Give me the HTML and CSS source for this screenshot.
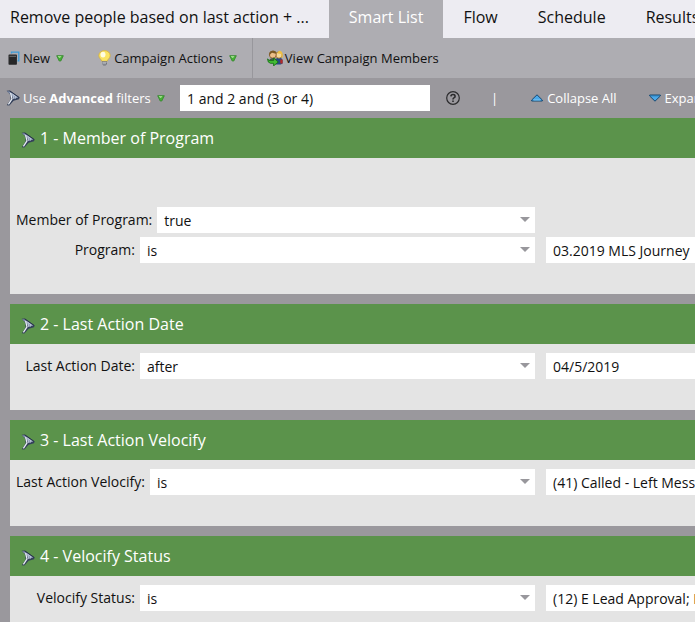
FILE: index.html
```html
<!DOCTYPE html>
<html lang="en">
<head>
    <meta charset="UTF-8">
    <meta name="viewport" content="width=device-width, initial-scale=1.0">
    <title>Smart List</title>
    <link rel="stylesheet" href="styles.css">
</head>
<body>
    <svg class="sprites" aria-hidden="true">
        <symbol id="funnel" viewBox="0 0 14 16">
            <path d="M.6 .8 3.800 .6 13.600 7.400 13 9.200 7.600 10.800 3.400 15.600 .8 15.200 4.600 9.600 4.300 4.800Z" fill="#34405a"/>
            <path d="M1 1.200 3.600 1.400 12.400 7.600 8 8.800 5.200 5Z" fill="#8d9bb4"/>
            <path d="M4.600 3.200 6 8.800 2.400 14.400" fill="none" stroke="#e8edf5" stroke-width="1.300"/>
            <path d="M5.500 3.400 10.500 7M7.200 5.200 7.600 9M9.400 6.400 9.200 8.800" fill="none" stroke="#cdd6e6" stroke-width=".7"/>
            <path d="M3.800 .9 13.300 7.500" fill="none" stroke="#222c45" stroke-width=".8"/>
        </symbol>
        <symbol id="down" viewBox="0 0 8 7">
            <path d="M.7 .7h6.600L4.800 6H3.200Z" fill="#45b035" stroke="#3c8a34" stroke-width=".9"/>
            <path d="M2 1.500h3.200M2.800 2.500h1.600" stroke="#a2e08f" stroke-width=".9"/>
        </symbol>
    </svg>

    <nav class="tabs">
        <h1 class="tabs-title">Remove people based on last action + ...</h1>
        <a class="tab active" href="#">Smart List</a>
        <a class="tab" href="#">Flow</a>
        <a class="tab" href="#">Schedule</a>
        <a class="tab" href="#">Results</a>
    </nav>

    <div class="toolbar">
        <div class="toolbar-group">
            <button class="tool">
                <svg class="icon-new" viewBox="0 0 12 14">
                    <path d="M3.500 2.500V1.200h7.300v8.600H9.500" fill="none" stroke="#3b9bd8" stroke-width="1.300"/>
                    <path d="M1.200 4.200h7v8.800h-7Z" fill="#262728" stroke="#262728" stroke-width="1.400" stroke-linejoin="round"/>
                    <path d="M1.500 5.300h6.500" stroke="#77797b" stroke-width=".9"/>
                </svg>
                New
                <svg class="down"><use href="#down"/></svg>
            </button>
            <button class="tool">
                <svg class="icon-bulb" viewBox="0 0 13 16">
                    <path d="M6.500 .6C3.200 .6 .8 2.800 .8 5.600c0 2.800 2.600 3.600 3 5.700h5.400c.4-2.100 3-2.900 3-5.700C12.200 2.800 9.800 .6 6.500 .6Z" fill="#fbe462" stroke="#d6ae3c" stroke-width=".8"/>
                    <ellipse cx="5" cy="4.600" rx="2.500" ry="2.900" fill="#fffde0"/>
                    <path d="M4 11.200h5v2.800L7.600 15.500H5.400L4 14Z" fill="#6d7078"/>
                    <path d="M4.300 12.300h4.300M4.300 13.800h3.800" stroke="#dddfe4" stroke-width=".7"/>
                </svg>
                Campaign Actions
                <svg class="down"><use href="#down"/></svg>
            </button>
        </div>
        <button class="tool tool-members">
            <svg class="icon-members" viewBox="0 0 16 16">
                <path d="M8.500 14.500V10q.5-2.500 3.500-2.500t3.600 2.500v3.500l-2 1Z" fill="#264a83"/>
                <path d="M13.300 9.500h2.300v4h-2.300Z" fill="#b82926"/>
                <circle cx="12" cy="5" r="3.200" fill="#f6d79b" stroke="#9c6d22" stroke-width=".8"/>
                <path d="M10.400 3.400Q10.800 .6 13 .8t2.700 3.200v4l-1.200-1V4Z" fill="#f0c245"/>
                <circle cx="5.800" cy="4.800" r="3.400" fill="#edc08a" stroke="#875628" stroke-width=".8"/>
                <path d="M2.200 6.500V3Q3 .6 6 .5t3.700 2.500L8 3.500 5 2.800 3.500 4Z" fill="#7c5a26"/>
                <path d="M2.500 11V9.800q.5-1.800 3.500-1.800t3.500 1.800V12Z" fill="#455848"/>
                <path d="M.6 8.800Q1.500 10.600 3 10.600h3.600V8l4.600 4-4.600 3.900v-2.600H3.500Q.6 13 .6 8.800Z" fill="#43bd35" stroke="#186f18" stroke-width=".9"/>
            </svg>
            View Campaign Members
        </button>
    </div>

    <main class="smart-list">
        <div class="filter-bar">
            <button class="filter-mode">
                <svg class="funnel"><use href="#funnel"/></svg>
                <span>Use <b>Advanced</b> filters</span>
                <svg class="down"><use href="#down"/></svg>
            </button>
            <input class="logic" type="text" aria-label="Filter logic" value="1 and 2 and (3 or 4)">
            <button class="help" aria-label="Help">
                <svg viewBox="0 0 14 14">
                    <circle cx="7" cy="7" r="6.300" fill="none" stroke="#2b2b2d" stroke-width="1.200"/>
                    <path d="M4.900 5.400Q5 3.500 7 3.500t2.100 1.700Q9.100 6.300 7.900 6.900 7 7.400 7 8.500" fill="none" stroke="#2b2b2d" stroke-width="1.600"/>
                    <path d="M6.200 9.500h1.600v1.500H6.200Z" fill="#2b2b2d"/>
                </svg>
            </button>
            <span class="divider">|</span>
            <button class="toggle-all">
                <svg viewBox="0 0 12 8"><path d="M6 .8 11.300 6v1H.7V6Z" fill="#4ba8e8" stroke="#174871"/><path d="M2.500 6h7" stroke="#8bd0fa" stroke-width=".8"/></svg>
                Collapse All
            </button>
            <button class="toggle-all">
                <svg viewBox="0 0 12 8"><path d="M6 7.200 11.300 2V1H.7v1Z" fill="#4ba8e8" stroke="#174871"/><path d="M2 1.800h8" stroke="#2872aa"/></svg>
                Expand All
            </button>
        </div>

        <section class="filter">
            <h2 class="filter-title"><svg class="funnel"><use href="#funnel"/></svg>1 - Member of Program</h2>
            <div class="filter-body with-blank">
                <div class="row">
                    <div class="field">
                        <label for="member">Member of Program:</label>
                        <div class="select"><select id="member"><option>true</option><option>false</option></select></div>
                    </div>
                </div>
                <div class="row">
                    <div class="field">
                        <label for="program">Program:</label>
                        <div class="select"><select id="program"><option>is</option><option>is not</option></select></div>
                    </div>
                    <input class="value" type="text" aria-label="Program value" value="03.2019 MLS Journey">
                </div>
            </div>
        </section>

        <section class="filter">
            <h2 class="filter-title"><svg class="funnel"><use href="#funnel"/></svg>2 - Last Action Date</h2>
            <div class="filter-body">
                <div class="row">
                    <div class="field">
                        <label for="date">Last Action Date:</label>
                        <div class="select"><select id="date"><option>after</option><option>before</option></select></div>
                    </div>
                    <input class="value" type="text" aria-label="Last Action Date value" value="04/5/2019">
                </div>
            </div>
        </section>

        <section class="filter">
            <h2 class="filter-title"><svg class="funnel"><use href="#funnel"/></svg>3 - Last Action Velocify</h2>
            <div class="filter-body">
                <div class="row">
                    <div class="field">
                        <label for="velocify">Last Action Velocify:</label>
                        <div class="select"><select id="velocify"><option>is</option><option>is not</option></select></div>
                    </div>
                    <input class="value" type="text" aria-label="Last Action Velocify value" value="(41) Called - Left Message">
                </div>
            </div>
        </section>

        <section class="filter">
            <h2 class="filter-title"><svg class="funnel"><use href="#funnel"/></svg>4 - Velocify Status</h2>
            <div class="filter-body">
                <div class="row">
                    <div class="field">
                        <label for="status">Velocify Status:</label>
                        <div class="select"><select id="status"><option>is</option><option>is not</option></select></div>
                    </div>
                    <input class="value" type="text" aria-label="Velocify Status value" value="(12) E Lead Approval; Lead">
                </div>
            </div>
        </section>
    </main>
</body>
</html>
```
FILE: styles.css
```css
* {
    box-sizing: border-box;
}
body {
    margin: 0;
    overflow: hidden;
    background-color: #9a989d;
    font-family: "Open Sans", sans-serif;
    font-size: 14px;
    color: #111;
}
button, input, select {
    font: inherit;
    color: inherit;
    border: none;
    border-radius: 0;
    padding: 0;
    margin: 0;
}
button {
    background: none;
    white-space: nowrap;
    cursor: pointer;
}
svg {
    display: block;
    flex: none;
}
.sprites {
    position: absolute;
    width: 0;
    height: 0;
}
.funnel {
    width: 14px;
    height: 16px;
}
.down {
    width: 8px;
    height: 7px;
}

/* tabs */
.tabs {
    display: flex;
    height: 38px;
    background-color: #edecf2;
    font-size: 16px;
    line-height: 34px;
    white-space: nowrap;
}
.tabs-title {
    flex: none;
    margin: 0;
    padding: 0 20px 0 10px;
    font-size: 16px;
    font-weight: 400;
}
.tab {
    flex: none;
    padding: 0 20px;
    color: #111;
    text-decoration: none;
}
.tab.active {
    background-color: #aeadb2;
    color: #fff;
}

/* toolbar */
.toolbar {
    display: flex;
    height: 40px;
    background-color: #aeadb2;
    font-size: 13px;
}
.toolbar-group {
    display: flex;
    gap: 34px;
    padding: 0 15px 0 8px;
    border-right: 1px solid #98979c;
}
.tool {
    display: flex;
    align-items: center;
    gap: 3px;
}
.tool .down {
    margin-left: 3px;
}
.tool-members {
    gap: 2px;
    padding-left: 14px;
}
.icon-new {
    width: 12px;
    height: 14px;
}
.icon-bulb {
    width: 13px;
    height: 16px;
}
.icon-members {
    width: 16px;
    height: 16px;
}

/* filter bar */
.filter-bar {
    display: flex;
    align-items: center;
    height: 40px;
    padding-left: 6px;
    font-size: 13px;
    color: #fff;
}
.filter-mode {
    display: flex;
    align-items: center;
    gap: 3px;
    width: 174px;
    flex: none;
}
.filter-mode .down {
    margin-left: 3px;
}
.logic {
    flex: none;
    width: 250px;
    height: 26px;
    padding: 0 7px;
    background-color: #fff;
    color: #111;
    font-size: 14px;
}
.help {
    flex: none;
    margin: 0 31px 0 16px;
}
.help svg {
    width: 14px;
    height: 14px;
}
.divider {
    margin-right: 33px;
}
.toggle-all {
    display: flex;
    align-items: center;
    flex: none;
    gap: 4px;
    margin-right: 32px;
}
.toggle-all svg {
    width: 12px;
    height: 8px;
}

/* filters */
.filter {
    margin: 0 0 10px 10px;
}
.filter-title {
    display: flex;
    align-items: center;
    gap: 5px;
    height: 40px;
    margin: 0;
    padding-left: 11px;
    background-color: #5b934b;
    color: #fff;
    font-size: 16px;
    font-weight: 400;
}
.filter-title .funnel {
    margin-top: 3px;
}
.filter-body {
    display: flex;
    flex-direction: column;
    gap: 4px;
    padding: 9px 0 31px;
    background-color: #e4e4e4;
}
.filter-body.with-blank {
    padding-top: 49px;
}
.row {
    display: flex;
    gap: 11px;
}
.field {
    display: flex;
    flex: none;
    gap: 5px;
    width: 525px;
}
.field label {
    min-width: 125px;
    padding-left: 6px;
    line-height: 26px;
    text-align: right;
    white-space: nowrap;
}
.select {
    position: relative;
    flex: 1;
}
.select::after {
    content: "";
    position: absolute;
    top: 10px;
    right: 5px;
    border: 5px solid transparent;
    border-top-color: #98979c;
    border-bottom: none;
    pointer-events: none;
}
.select select {
    appearance: none;
    display: block;
    width: 100%;
    height: 26px;
    padding: 1px 7px 0;
    background-color: #fff;
}
.value {
    flex: 1 0 240px;
    height: 26px;
    padding: 1px 7px 0;
    background-color: #fff;
}
```
